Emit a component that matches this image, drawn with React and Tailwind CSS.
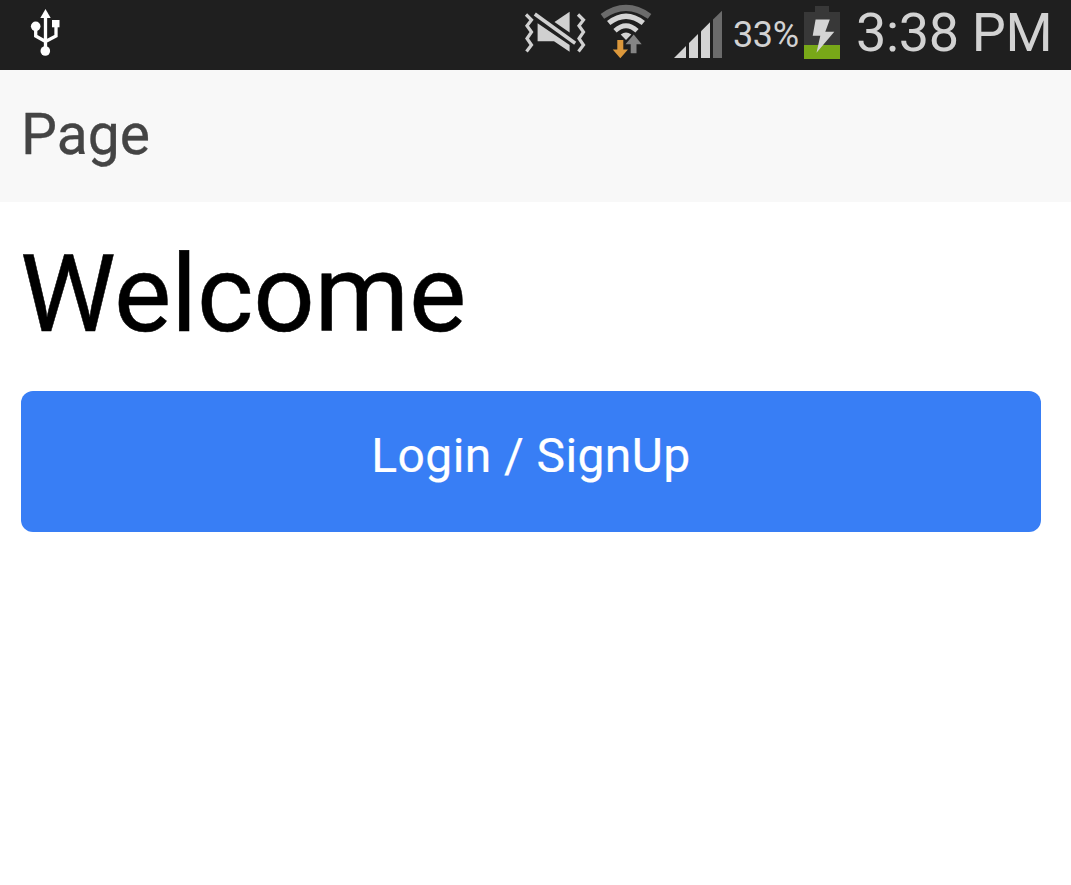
function UsbIcon() {
  return (
    <svg className="h-[70px] w-8" viewBox="30 0 32 70" fill="none" stroke="#fff" strokeWidth="3.3">
      <path d="M45.5 16V51M35.7 27V36L45.5 41.5M56 26V36L45.5 41.5" />
      <path d="M45.5 9L50.7 18H40.3Z" fill="#fff" stroke="none" />
      <circle cx="35.7" cy="26.3" r="4.8" fill="#fff" stroke="none" />
      <circle cx="45.3" cy="51" r="4.8" fill="#fff" stroke="none" />
      <rect x="52" y="20" width="7.5" height="7.3" fill="#fff" stroke="none" />
    </svg>
  );
}

function MuteIcon() {
  return (
    <svg className="h-[70px] w-16" viewBox="524 0 64 70" fill="#d0d0d0">
      <path d="M554.5 22L569.6 11.8V32.5Z" />
      <path d="M537.6 23.2L569.6 45V51.8L554 41.2H537.6Z" />
      <path d="M534.8 14L575.2 43.2" stroke="#d0d0d0" strokeWidth="3.6" fill="none" />
      <g stroke="#d0d0d0" strokeWidth="3.2" fill="none">
        <path d="M526 14.5L531.5 20L527 25.8L531.5 32L527 38.5L531.5 45L526.5 51.5" />
        <path d="M578 14.5L583.5 20L579 25.8L583.5 32L579 38.5L583.5 45L578.5 51.5" />
      </g>
    </svg>
  );
}

function WifiIcon() {
  return (
    <svg className="h-[70px] w-[52px]" viewBox="600 0 52 70" fill="none">
      <path d="M602.4 16.4Q626 -.6 649.6 16.4" stroke="#6b6b6b" strokeWidth="6" />
      <path d="M608.7 23Q626 9.3 643.3 23" stroke="#d4d4d4" strokeWidth="5.3" />
      <path d="M615 30.7Q626 20.7 637 30.7" stroke="#d4d4d4" strokeWidth="4.8" />
      <path d="M620.7 34.6Q626 30.2 631.3 34.6L626 40Z" fill="#d4d4d4" />
      <path d="M633.7 34.5L641.7 44.2H636.5V53.3H630.7V44.2H625.5Z" fill="#858585" stroke="#1f1f1f" strokeWidth="1" paintOrder="stroke" />
      <path d="M617.3 40H623.3V49.5H628L620.3 58.3L612.7 49.5H617.3Z" fill="#dc983b" />
    </svg>
  );
}

function SignalIcon() {
  return (
    <svg className="h-[70px] w-12" viewBox="674 0 48 70" fill="#d4d4d4">
      <path d="M674 58L686 46V58Z" />
      <path d="M689 58V43L698 34V58Z" />
      <path d="M701 58V31.3L710 22.3V58Z" />
      <path d="M713 58V19.5L722 10.8V58Z" fill="#6b6b6b" />
    </svg>
  );
}

function BatteryIcon() {
  return (
    <svg className="h-[70px] w-9" viewBox="804 0 36 70">
      <path d="M804 12H815V6H829V12H840V45H804Z" fill="#383838" />
      <rect x="804" y="45" width="36" height="14" fill="#78a818" />
      <path d="M815.6 19.5H829.8L825.3 31.7H834.3L816.5 52.7L820.3 35.7H812.7Z" fill="#d4d4d4" />
    </svg>
  );
}

export default function App() {
  return (
    <div className="min-h-[885px] bg-white font-[Roboto,sans-serif]">
      <div className="flex h-[70px] items-start bg-[#1f1f1f] pl-[30px] text-[#d2d2d2]">
        <UsbIcon />
        <div className="ml-auto flex w-[547px]">
          <MuteIcon />
          <div className="ml-3"><WifiIcon /></div>
          <div className="ml-[22px]"><SignalIcon /></div>
          <span className="ml-[11px] w-[71px] whitespace-nowrap text-[36px] leading-[71px] tracking-[-0.4px]">33%</span>
          <BatteryIcon />
          <span className="ml-4 whitespace-nowrap text-[54px] leading-[65px] tracking-[-0.35px]">3:38 PM</span>
        </div>
      </div>
      <header className="h-[132px] bg-[#f8f8f8] px-[21px]">
        <h1 className="text-[57px] leading-[129px] text-[#444] [-webkit-text-stroke:0.3px_#444]">Page</h1>
      </header>
      <main className="pl-[21px] pr-[30px] pt-7">
        <h2 className="-ml-px text-[108px] leading-[129px] tracking-[-0.25px] text-black [-webkit-text-stroke:0.5px_black]">Welcome</h2>
        <button className="mt-8 block h-[141px] w-full rounded-xl bg-[#387ef5] pb-3 text-center text-[48px] leading-[129px] tracking-[0.4px] text-white [-webkit-text-stroke:0.2px_white]">
          Login / SignUp
        </button>
      </main>
    </div>
  );
}
